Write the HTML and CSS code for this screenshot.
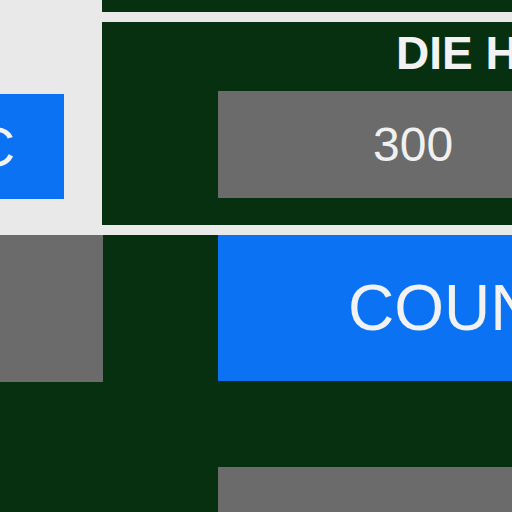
FILE: index.html
```html
<!DOCTYPE html>
<html>
<head>
<meta charset="utf-8">
<link rel="stylesheet" href="styles.css">
</head>
<body>
<div class="page">
  <div class="row-top">
    <div class="side"></div>
    <div class="panel panel-top"></div>
  </div>
  <div class="row-mid">
    <div class="side side-mid">
      <div class="btn-left">ABC</div>
    </div>
    <div class="panel panel-mid">
      <div class="panel-title">DIE HÖHE</div>
      <div class="field">300</div>
    </div>
  </div>
  <div class="row-bottom">
    <div class="col-a">
      <div class="grey-block"></div>
    </div>
    <div class="col-b">
      <div class="btn-count">COUNT</div>
      <div class="grey-field"></div>
    </div>
  </div>
</div>
</body>
</html>
```

FILE: styles.css
```css
html, body {
  margin: 0;
  padding: 0;
  width: 512px;
  height: 512px;
  overflow: hidden;
  background: #e9e9e9;
  font-family: "Liberation Sans", Arial, sans-serif;
}
.page {
  display: flex;
  flex-direction: column;
  gap: 10px;
  width: 512px;
  height: 512px;
  overflow: hidden;
}
.row-top {
  flex-shrink: 0;
  display: grid;
  grid-template-columns: 102px 1fr;
  height: 12px;
}
.row-mid {
  flex-shrink: 0;
  display: grid;
  grid-template-columns: 102px 1fr;
  height: 203px;
}
.panel {
  background: #06300f;
}
.side-mid {
  padding-top: 72px;
  overflow: visible;
}
.btn-left {
  margin-left: -100px;
  width: 164px;
  height: 105px;
  background: #0b73f3;
  color: #f2f2f2;
  font-size: 56px;
  line-height: 105px;
  text-align: right;
  padding-right: 57px;
  box-sizing: border-box;
}
.panel-mid {
  display: flex;
  flex-direction: column;
  padding-left: 116px;
  padding-top: 6px;
  box-sizing: border-box;
}
.panel-title {
  color: #f2f2f2;
  font-weight: bold;
  font-size: 46px;
  line-height: 50px;
  padding-left: 178px;
  white-space: nowrap;
}
.field {
  margin-top: 13px;
  width: 300px;
  height: 107px;
  background: #6b6b6b;
  color: #f0f0f0;
  font-size: 48px;
  line-height: 107px;
  padding-left: 155px;
  box-sizing: border-box;
  white-space: nowrap;
}
.row-bottom {
  flex: 1 0 auto;
  background: #06300f;
  display: grid;
  grid-template-columns: 103px 1fr;
  column-gap: 115px;
}
.grey-block {
  height: 147px;
  background: #6b6b6b;
}
.col-b {
  display: flex;
  flex-direction: column;
  gap: 86px;
}
.btn-count {
  height: 146px;
  background: #0b73f3;
  color: #f2f2f2;
  font-size: 64px;
  line-height: 146px;
  padding-left: 130px;
  white-space: nowrap;
}
.grey-field {
  height: 60px;
  background: #6b6b6b;
}
```
